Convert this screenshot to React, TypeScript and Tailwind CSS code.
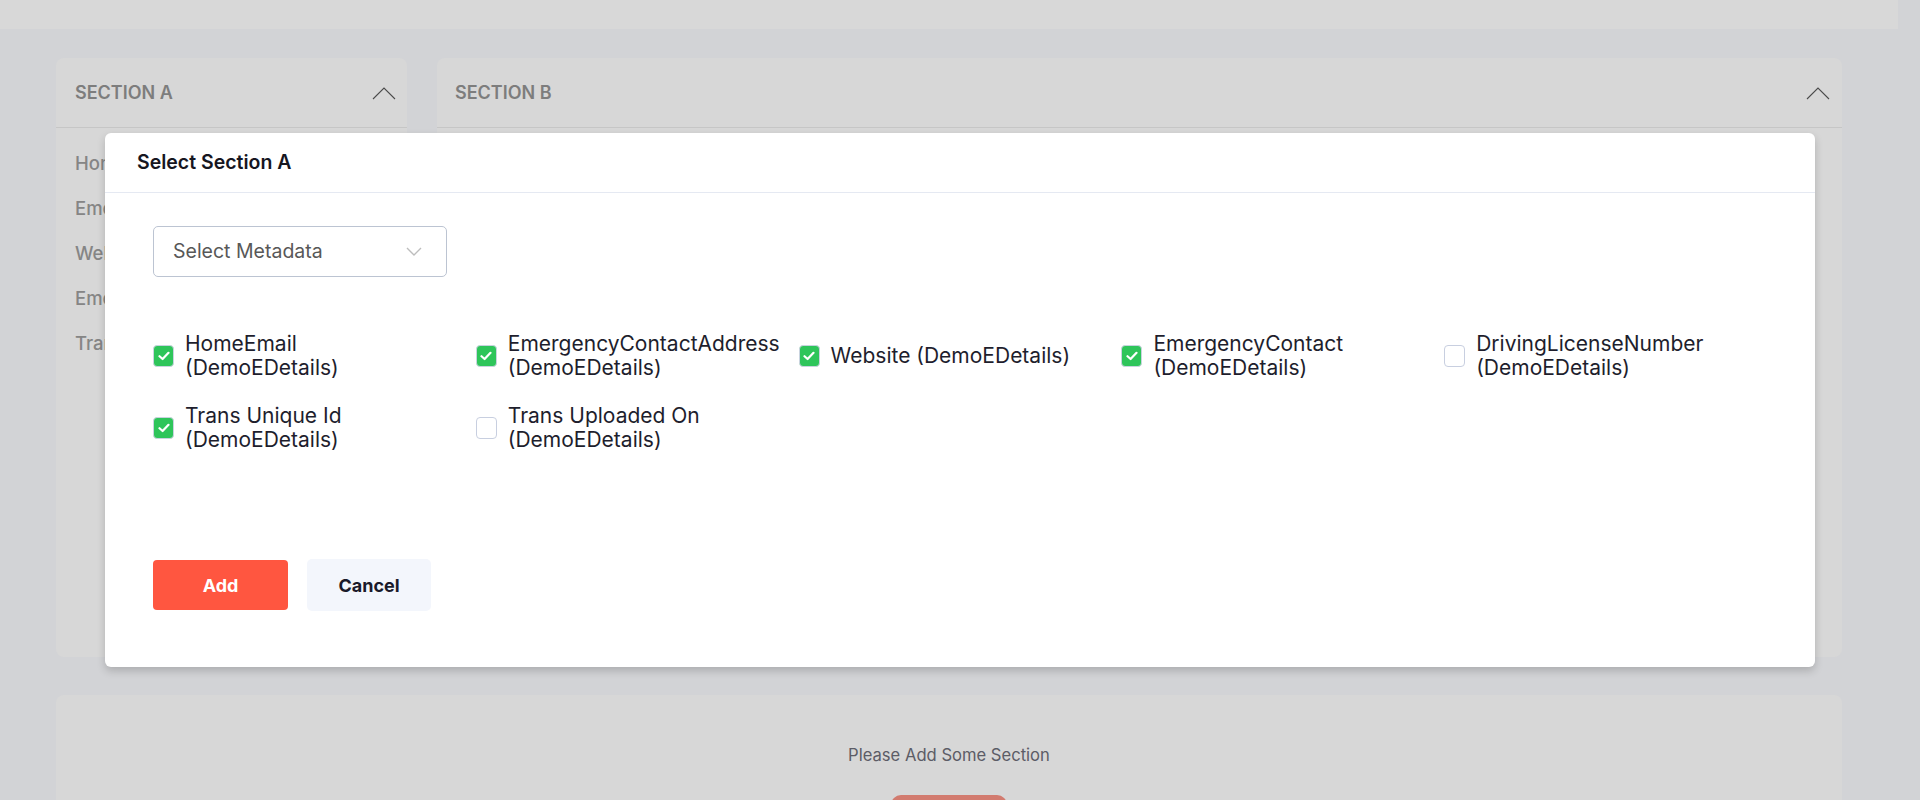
import React from "react";

type Item = { lines: string[]; checked: boolean };

const items: Item[] = [
  { lines: ["HomeEmail", "(DemoEDetails)"], checked: true },
  { lines: ["EmergencyContactAddress", "(DemoEDetails)"], checked: true },
  { lines: ["Website (DemoEDetails)"], checked: true },
  { lines: ["EmergencyContact", "(DemoEDetails)"], checked: true },
  { lines: ["DrivingLicenseNumber", "(DemoEDetails)"], checked: false },
  { lines: ["Trans Unique Id", "(DemoEDetails)"], checked: true },
  { lines: ["Trans Uploaded On", "(DemoEDetails)"], checked: false },
];

const bgItems = [
  "HomeEmail (DemoEDetails)",
  "EmergencyContactAddress (DemoEDetails)",
  "Website (DemoEDetails)",
  "EmergencyContact (DemoEDetails)",
  "Trans Unique Id (DemoEDetails)",
];

function Caret() {
  return (
    <svg width="24" height="14" viewBox="0 0 24 14" fill="none">
      <polyline points="1,13 12,2 23,13" stroke="#4a4a4a" strokeWidth="1.1" />
    </svg>
  );
}

function Checkbox({ checked }: { checked: boolean }) {
  if (checked) {
    return (
      <div className="w-[21px] h-[22px] shrink-0 rounded-[4px] bg-[#2ec55a] border border-[#c9d3df] flex items-center justify-center">
        <svg width="12" height="10" viewBox="0 0 12 10" fill="none">
          <polyline points="1.5,5.2 4.6,8 10.5,1.8" stroke="#ffffff" strokeWidth="2.2" strokeLinecap="round" strokeLinejoin="round" />
        </svg>
      </div>
    );
  }
  return <div className="w-[21px] h-[22px] shrink-0 rounded-[4px] bg-white border border-[#c8cfe0]" />;
}

export default function App() {
  return (
    <div className="relative w-[1920px] h-[800px] overflow-hidden bg-[#d2d3d6] font-['Inter','Noto_Sans',sans-serif]">
      <div className="h-[29px] w-[1898px] bg-[#d8d8d8]" />
      <div className="w-[1898px] px-[56px] pt-[29px]">
        <div className="flex gap-[30px] h-[599px]">
          <div className="w-[351px] rounded-[8px] bg-[#d7d7d7]">
            <div className="h-[70px] border-b border-[#c6c6c6] flex items-center justify-between pl-[19px] pr-[11px]">
              <span className="text-[18px] font-semibold text-[#7d7d7d] uppercase">Section A</span>
              <Caret />
            </div>
            <div className="pt-[13px] pl-[19px] overflow-hidden">
              {bgItems.map((t) => (
                <div key={t} className="h-[45px] flex items-center text-[18.5px] font-medium text-[#858585] whitespace-nowrap">
                  {t}
                </div>
              ))}
            </div>
          </div>
          <div className="flex-1 rounded-[8px] bg-[#d7d7d7]">
            <div className="h-[70px] border-b border-[#c6c6c6] flex items-center justify-between pl-[18px] pr-[12px]">
              <span className="text-[18px] font-semibold text-[#7d7d7d] uppercase">Section B</span>
              <Caret />
            </div>
          </div>
        </div>
        <div className="mt-[38px] h-[200px] rounded-[8px] bg-[#d7d7d7] flex flex-col items-center pt-[48px]">
          <div className="text-[16.6px] leading-[24px] text-[#5c5c66]">Please Add Some Section</div>
          <div className="mt-[28px] w-[116px] h-[46px] rounded-[10px] bg-[#d27b6f]" />
        </div>
      </div>

      <div className="absolute left-[105px] top-[133px] w-[1710px] rounded-[6px] bg-white shadow-[0_4px_8px_rgba(0,0,0,0.18)]">
        <div className="h-[60px] border-b border-[#e5e9f2] px-[32px] flex items-center">
          <span className="text-[19.5px] font-semibold text-[#16161f]">Select Section A</span>
        </div>
        <div className="px-[48px] pt-[33px] pb-[56px]">
          <div className="w-[294px] h-[51px] border border-[#bcc4d2] rounded-[5px] flex items-center justify-between pl-[19px] pr-[24px]">
            <span className="text-[19.5px] text-[#585858]">Select Metadata</span>
            <svg width="16" height="9" viewBox="0 0 16 9" fill="none">
              <polyline points="1,1 8,8 15,1" stroke="#bdbdbd" strokeWidth="1.4" />
            </svg>
          </div>
          <div className="mt-[55px] grid grid-cols-5 gap-y-[24px]">
            {items.map((it, i) => (
              <div key={i} className="flex items-center gap-[11px]">
                <Checkbox checked={it.checked} />
                <div className="text-[21px] leading-[24px] text-[#1e1e2d] whitespace-nowrap">
                  {it.lines.map((l) => (
                    <div key={l}>{l}</div>
                  ))}
                </div>
              </div>
            ))}
          </div>
          <div className="mt-[107px] flex items-center gap-[19px]">
            <button className="w-[135px] h-[50px] rounded-[4px] bg-[#ff5640] text-white text-[18px] font-bold">Add</button>
            <button className="w-[124px] h-[52px] rounded-[5px] bg-[#f3f6fc] text-[#1a1a2a] text-[18px] font-bold">Cancel</button>
          </div>
        </div>
      </div>
    </div>
  );
}
